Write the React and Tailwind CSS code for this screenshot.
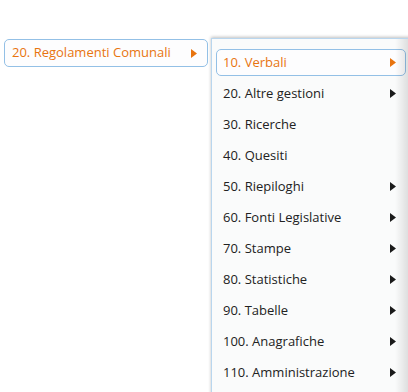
import React from "react";

const items = [
  { label: "10. Verbali", sub: true, active: true },
  { label: "20. Altre gestioni", sub: true },
  { label: "30. Ricerche" },
  { label: "40. Quesiti" },
  { label: "50. Riepiloghi", sub: true },
  { label: "60. Fonti Legislative", sub: true },
  { label: "70. Stampe", sub: true },
  { label: "80. Statistiche", sub: true },
  { label: "90. Tabelle", sub: true },
  { label: "100. Anagrafiche", sub: true },
  { label: "110. Amministrazione", sub: true },
];

function Arrow({ color }) {
  return (
    <svg width="6" height="9" viewBox="0 0 6 9" className="shrink-0">
      <path d="M0 0 L6 4.5 L0 9 Z" fill={color} />
    </svg>
  );
}

export default function App() {
  return (
    <div
      className="w-[408px] h-[392px] overflow-hidden bg-white text-[13px] text-[#333]"
      style={{ fontFamily: '"Open Sans", "Liberation Sans", sans-serif' }}
    >
      <div className="flex items-start pt-[38px] pl-[4px]">
        {/* Top-level menu */}
        <div className="shrink-0 mt-[1px] w-[204px] h-[28px] flex items-center justify-between pl-[7px] pr-[10px] border border-[#93c0e6] rounded-[5px] bg-[#fdfdfe] text-[#e8740f]">
          <span>20. Regolamenti Comunali</span>
          <Arrow color="#e8740f" />
        </div>

        {/* Submenu */}
        <div className="relative shrink-0 ml-[3px] w-[200px] h-[400px] bg-[#fafbfb] border-l border-t border-[#b9d6ee] shadow-[0_-1px_3px_rgba(0,0,0,0.25)] pt-[10px] pl-[4px] pr-[5px]">
          <div className="flex flex-col gap-[4px]">
            {items.map((it, i) => (
              <div
                key={i}
                className={
                  it.active
                    ? "h-[27px] flex items-center justify-between pl-[6px] pr-[9px] border border-[#93c0e6] rounded-[5px] bg-[#fdfdfe] text-[#e8740f]"
                    : "h-[27px] flex items-center justify-between pl-[7px] pr-[10px] text-[#222]"
                }
              >
                <span>{it.label}</span>
                {it.sub && <Arrow color={it.active ? "#e8740f" : "#1a1a1a"} />}
              </div>
            ))}
          </div>
          <div className="absolute top-0 bottom-0 left-[183px] w-[14px] bg-gradient-to-r from-transparent to-[rgba(0,0,0,0.12)]" />
        </div>
      </div>
    </div>
  );
}
